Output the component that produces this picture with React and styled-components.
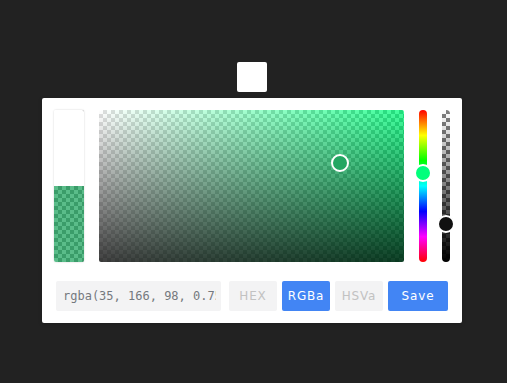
import React from "react";
import styled, { createGlobalStyle } from "styled-components";

const Global = createGlobalStyle`
  html, body { margin: 0; padding: 0; background: #222222; }
  body { width: 507px; height: 383px; overflow: hidden; font-family: "DejaVu Sans", sans-serif; }
  * { box-sizing: border-box; }
`;

const checker = `conic-gradient(#808080 25%, #ffffff 0 50%, #808080 0 75%, #ffffff 0)`;

const Stage = styled.div`
  display: flex;
  flex-direction: column;
  align-items: flex-start;
  padding: 62px 0 0 42px;
  gap: 6px;
`;

const Trigger = styled.button`
  width: 30px;
  height: 30px;
  margin-left: 195px;
  border: none;
  padding: 0;
  border-radius: 2px;
  background: #ffffff;
`;

const Panel = styled.div`
  width: 420px;
  height: 225px;
  background: #ffffff;
  border-radius: 2px;
  padding: 12px;
  display: flex;
  flex-direction: column;
  gap: 19px;
  box-shadow: 0 1px 4px rgba(0, 0, 0, 0.2);
`;

const Selection = styled.div`
  display: flex;
  height: 152px;
  gap: 15px;
`;

const Preview = styled.div`
  width: 30px;
  display: flex;
  flex-direction: column;
  border-radius: 2px;
  box-shadow: 0 0 2px rgba(0, 0, 0, 0.2);
  overflow: hidden;
`;

const Swatch = styled.div`
  flex: 1;
  background-image: linear-gradient(${(p) => p.$color}, ${(p) => p.$color}),
    ${checker};
  background-size: 100% 100%, 8px 8px;
`;

const Palette = styled.div`
  position: relative;
  flex: 1;
  border-radius: 2px;
  background-image: linear-gradient(to top, rgba(0, 0, 0, 0.75), transparent),
    linear-gradient(to left, hsla(149, 100%, 50%, 0.75), rgba(255, 255, 255, 0.75)),
    ${checker};
  background-size: 100% 100%, 100% 100%, 8px 8px;
`;

const Knob = styled.div`
  position: absolute;
  width: 18px;
  height: 18px;
  border: 2px solid #ffffff;
  border-radius: 50%;
  background: ${(p) => p.$fill};
  transform: translate(-50%, -50%);
`;

const Slider = styled.div`
  position: relative;
  width: 8px;
  border-radius: 50em;
  background-image: ${(p) => p.$bg};
  background-size: ${(p) => p.$size};
`;

const Interaction = styled.div`
  display: flex;
  align-items: center;
  height: 30px;
`;

const Result = styled.input`
  flex: 0 0 165px;
  width: 165px;
  height: 30px;
  margin: 0 8px 0 2px;
  border: none;
  border-radius: 2px;
  background: #f3f3f4;
  color: #75797e;
  font-family: "DejaVu Sans Mono", monospace;
  font-size: 12px;
  padding: 0 5px 0 7px;
  outline: none;
`;

const TypeButton = styled.button`
  flex: 0 0 ${(p) => p.$w || 48}px;
  width: ${(p) => p.$w || 48}px;
  height: 30px;
  margin-right: ${(p) => (p.$last ? 2 : 5)}px;
  border: none;
  border-radius: 2px;
  padding: 0;
  font-family: "DejaVu Sans", sans-serif;
  font-size: 12px;
  letter-spacing: 0.07em;
  background: ${(p) => (p.$active ? "#4285f4" : "#f3f3f4")};
  color: ${(p) => (p.$active ? "#ffffff" : "#c2c2c2")};
`;

const hueBg = "linear-gradient(to bottom, #f00, #ff0, #0f0, #0ff, #00f, #f0f, #f00)";
const opBg = `linear-gradient(to bottom, transparent, #000), ${checker}`;

export default function App() {
  return (
    <>
      <Global />
      <Stage>
        <Trigger aria-label="color" />
        <Panel>
          <Selection>
            <Preview>
              <Swatch $color="#ffffff" />
              <Swatch $color="rgba(35, 166, 98, 0.75)" />
            </Preview>
            <Palette>
              <Knob $fill="rgb(35, 166, 98)" style={{ left: "79%", top: "35%" }} />
            </Palette>
            <Slider $bg={hueBg} $size="100% 100%">
              <Knob $fill="hsl(149, 100%, 50%)" style={{ left: "50%", top: "41.4%" }} />
            </Slider>
            <Slider $bg={opBg} $size="100% 100%, 8px 8px">
              <Knob $fill="#111111" style={{ left: "50%", top: "75%" }} />
            </Slider>
          </Selection>
          <Interaction>
            <Result readOnly value="rgba(35, 166, 98, 0.75)" />
            <TypeButton>HEX</TypeButton>
            <TypeButton $active>RGBa</TypeButton>
            <TypeButton>HSVa</TypeButton>
            <TypeButton $active $last $w={60}>Save</TypeButton>
          </Interaction>
        </Panel>
      </Stage>
    </>
  );
}
